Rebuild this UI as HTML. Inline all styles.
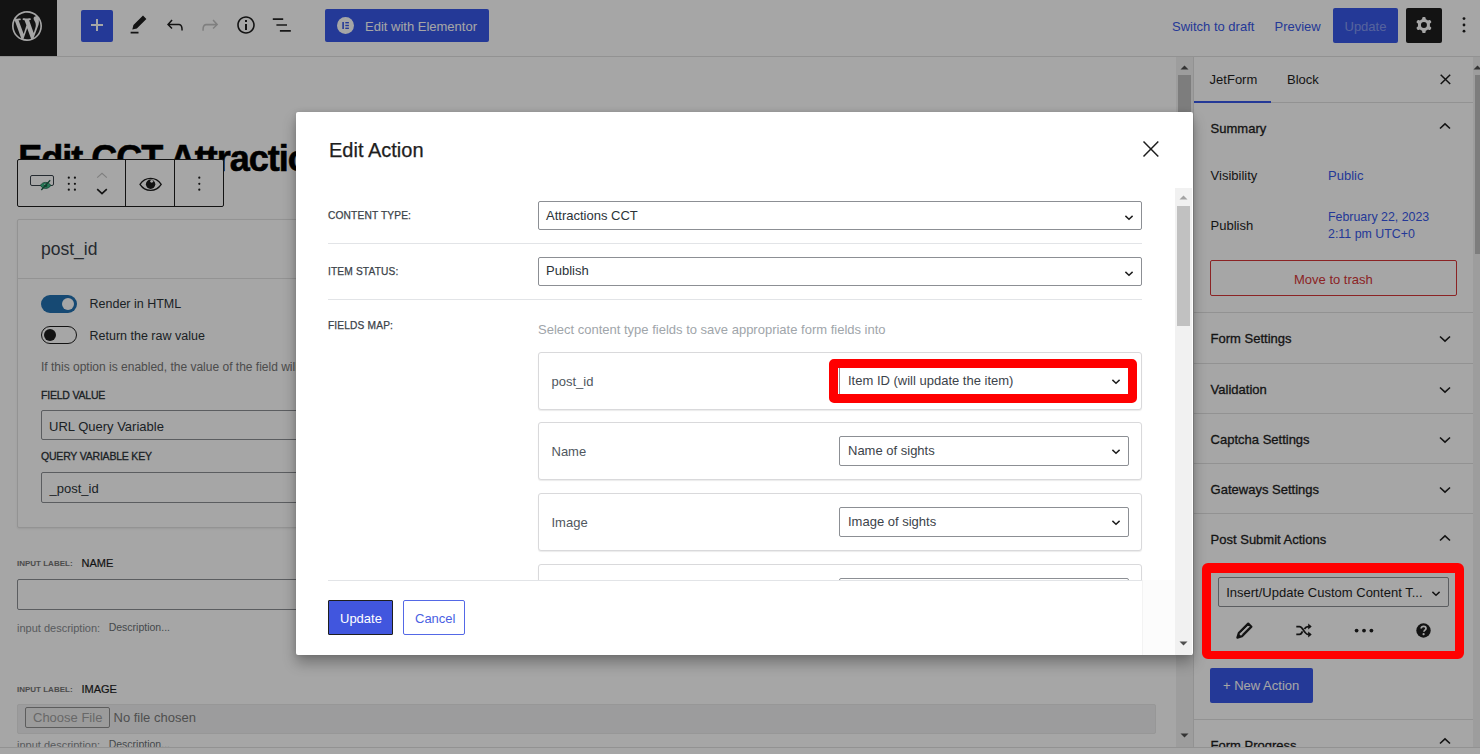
<!DOCTYPE html>
<html><head><meta charset="utf-8">
<style>
*{box-sizing:border-box;margin:0;padding:0}
html,body{width:1480px;height:754px;overflow:hidden;background:#fff;font-family:"Liberation Sans",sans-serif;color:#1e1e1e}
.a{position:absolute}
.t{position:absolute;white-space:nowrap;line-height:1}
svg{display:block}
/* top bar */
#topbar{left:0;top:0;width:1480px;height:57px;background:#fff;border-bottom:1px solid #e0e0e0}
#wplogo{left:0;top:0;width:57px;height:56px;background:#1e1e1e}
#overlay{left:0;top:0;width:1480px;height:754px;background:rgba(0,0,0,.35)}
#modal{left:296px;top:112px;width:897px;height:543px;background:#fff;border-radius:2px;box-shadow:0 8px 14px rgba(0,0,0,.3),0 0 5px rgba(0,0,0,.12)}
.redbox{position:absolute;border:9px solid #ff0000;border-radius:6px}
</style></head>
<body>
<!-- ============ PAGE (under overlay) ============ -->
<div id="page" class="a" style="left:0;top:0;width:1480px;height:754px">
  <div id="topbar" class="a"></div>
  <div id="wplogo" class="a"></div>
  <svg class="a" style="left:12px;top:11px" width="30" height="30" viewBox="0 0 20 20"><path fill="#fff" d="M20 10c0-5.51-4.49-10-10-10C4.48 0 0 4.49 0 10c0 5.52 4.48 10 10 10 5.51 0 10-4.48 10-10zM7.78 15.37L4.37 6.22c.55-.02 1.17-.08 1.17-.08.5-.06.44-1.130-.06-1.11 0 0-1.45.11-2.37.11-.18 0-.37 0-.58-.01C4.12 2.690 6.870 1.110 10 1.110c2.330 0 4.450.87 6.050 2.340-.68-.11-1.650.39-1.650 1.580 0 .74.45 1.360.9 2.100.35.61.55 1.360.55 2.460 0 1.490-1.400 5-1.400 5l-3.030-8.370c.54-.02.82-.17.82-.17.5-.05.44-1.250-.06-1.220 0 0-1.440.12-2.380.12-.87 0-2.330-.12-2.330-.12-.5-.03-.56 1.200-.06 1.220l.92.08 1.260 3.410zM17.410 10c.24-.64.74-1.870.43-4.250.7 1.290 1.050 2.710 1.050 4.250 0 3.290-1.730 6.240-4.400 7.780.97-2.590 1.940-5.200 2.920-7.780zM6.100 18.090C3.120 16.650 1.110 13.530 1.110 10c0-1.300.23-2.480.72-3.590C3.250 10.300 4.670 14.200 6.100 18.090zm4.030-6.630l2.580 6.980c-.86.29-1.760.45-2.710.45-.79 0-1.570-.11-2.290-.33.81-2.380 1.620-4.740 2.420-7.100z"/></svg>
  <div class="a" style="left:81px;top:10px;width:32px;height:32px;background:#3858e9;border-radius:2px"></div>
  <div class="a" style="left:90.7px;top:24.2px;width:12.2px;height:1.6px;background:#fff"></div><div class="a" style="left:96px;top:19px;width:1.6px;height:12.2px;background:#fff"></div>
  <svg class="a" style="left:124.6px;top:11px" width="27" height="27" viewBox="0 0 24 24"><path fill="#1e1e1e" d="m19 7-3-3-8.5 8.5-1 4 4-1L19 7Zm-7 11.5H5V20h7v-1.5Z"/></svg>
  <svg class="a" style="left:163px;top:13px" width="24" height="24" viewBox="0 0 24 24"><path fill="#1e1e1e" d="M18.3 11.7c-.6-.6-1.4-.9-2.3-.9H6.7l2.9-3.3-1.1-1-4.5 5L8.5 16l1-1-2.7-2.7H16c.5 0 .9.2 1.3.5 1 1 1 3.4 1 4.5v.3h1.5v-.2c0-1.5 0-4.3-1.5-5.7z"/></svg>
  <svg class="a" style="left:198px;top:13px" width="24" height="24" viewBox="0 0 24 24"><path fill="#c4c4c4" d="M15.6 6.5l-1.1 1 2.9 3.3H8c-.9 0-1.7.3-2.3.9-1.4 1.5-1.4 4.2-1.4 5.8v.2h1.5v-.3c0-1.1 0-3.5 1-4.5.3-.3.7-.5 1.300-.5h9.2L14.5 15l1.1 1.1 4.6-4.6-4.6-5z"/></svg>
  <svg class="a" style="left:234px;top:13px" width="24" height="24" viewBox="0 0 24 24"><path fill="#1e1e1e" d="M12 3.2c-4.8 0-8.8 3.9-8.8 8.8 0 4.8 3.9 8.8 8.8 8.8 4.8 0 8.8-3.9 8.8-8.8 0-4.8-4-8.8-8.8-8.8zm0 16c-4 0-7.2-3.3-7.2-7.2C4.8 8 8 4.8 12 4.8s7.2 3.3 7.2 7.2c0 4-3.2 7.2-7.2 7.2zM11 17h2v-6h-2v6zm0-8h2V7h-2v2z"/></svg>
  <svg class="a" style="left:270px;top:10px" width="24" height="24" viewBox="0 0 24 24"><path fill="#262626" d="M2.8 8.3h10.4v1.6H2.8zM6.4 14.2h10.6v1.6H6.4zM9.9 20.1h10.9v1.7H9.9z"/></svg>
  <div class="a" style="left:325px;top:9px;width:164px;height:33px;background:#3858e9;border-radius:2px"></div>
  <svg class="a" style="left:337px;top:17px" width="17" height="17" viewBox="0 0 17 17"><circle cx="8.5" cy="8.5" r="8.5" fill="#fff"/><rect x="5.3" y="5" width="1.6" height="7" fill="#3858e9"/><rect x="8.3" y="5" width="3.6" height="1.4" fill="#3858e9"/><rect x="8.3" y="7.8" width="3.6" height="1.4" fill="#3858e9"/><rect x="8.3" y="10.6" width="3.6" height="1.4" fill="#3858e9"/></svg>
  <div class="t" style="left:365px;top:20px;font-size:13px;color:#fff">Edit with Elementor</div>
  <div class="t" style="left:1172px;top:20px;font-size:13px;color:#3858e9">Switch to draft</div>
  <div class="t" style="left:1274.5px;top:20px;font-size:13px;color:#3858e9">Preview</div>
  <div class="a" style="left:1333px;top:8px;width:65px;height:35px;background:#3858e9;border-radius:2px"></div>
  <div class="t" style="left:1344.5px;top:20px;font-size:13px;color:rgba(255,255,255,.4)">Update</div>
  <div class="a" style="left:1406px;top:8px;width:36px;height:35px;background:#1e1e1e;border-radius:2px"></div>
  <svg class="a" style="left:1412px;top:13px" width="24" height="24" viewBox="0 0 24 24"><path fill="#fff" fill-rule="evenodd" d="M10.289 4.836A1 1 0 0111.275 4h1.306a1 1 0 01.987.836l.244 1.466c.787.26 1.503.679 2.108 1.218l1.393-.522a1 1 0 011.216.437l.653 1.13a1 1 0 01-.23 1.273l-1.148.944a6.025 6.025 0 010 2.435l1.149.946a1 1 0 01.23 1.272l-.653 1.13a1 1 0 01-1.216.437l-1.394-.522c-.605.54-1.32.958-2.108 1.218l-.244 1.466a1 1 0 01-.987.836h-1.306a1 1 0 01-.986-.836l-.244-1.466a5.995 5.995 0 01-2.108-1.218l-1.394.522a1 1 0 01-1.217-.436l-.653-1.131a1 1 0 01.23-1.272l1.149-.946a6.026 6.026 0 010-2.435l-1.148-.944a1 1 0 01-.23-1.272l.653-1.131a1 1 0 011.217-.437l1.393.522a5.994 5.994 0 012.108-1.218l.244-1.466zM14.929 12a3 3 0 11-6 0 3 3 0 016 0z"/></svg>
  <svg class="a" style="left:1460px;top:15px" width="8" height="20" viewBox="0 0 8 20"><circle cx="4" cy="3.6" r="1.4" fill="#1e1e1e"/><circle cx="4" cy="10" r="1.4" fill="#1e1e1e"/><circle cx="4" cy="16.2" r="1.4" fill="#1e1e1e"/></svg>
  <!-- editor canvas -->
  <div class="t" style="left:18.2px;top:140.5px;font-size:36px;font-weight:bold;color:#000;letter-spacing:-1px;-webkit-text-stroke:0.6px #000">Edit CCT Attractions</div>
  <!-- block toolbar -->
  <div class="a" style="left:17px;top:159px;width:207px;height:48px;background:#fff;border:1px solid #1e1e1e;border-radius:2px"></div>
  <div class="a" style="left:125px;top:159px;width:1px;height:48px;background:#1e1e1e"></div>
  <div class="a" style="left:174px;top:159px;width:1px;height:48px;background:#1e1e1e"></div>
  <svg class="a" style="left:24px;top:166px" width="90" height="34" viewBox="0 0 90 34">
    <rect x="6.5" y="9.5" width="23" height="10" rx="1.5" fill="none" stroke="#3a434c" stroke-width="1"/>
    <path d="M16.3 19.4C17.6 17.4 19.5 16.4 21.6 16.4S25.6 17.4 26.9 19.4C25.6 21.4 23.7 22.4 21.6 22.4S17.6 21.4 16.3 19.4Z" fill="#36b883" stroke="#1f5f49" stroke-width="0.8"/>
    <circle cx="21.6" cy="19.4" r="1.7" fill="#1f5f49"/><circle cx="21" cy="18.6" r="0.8" fill="#d8f0e6"/>
    <line x1="17.3" y1="24" x2="26.2" y2="14.3" stroke="#1f5f49" stroke-width="1.3"/>
    <circle cx="44.8" cy="11.7" r="1.1" fill="#1e1e1e"/><circle cx="50.9" cy="11.7" r="1.1" fill="#1e1e1e"/>
    <circle cx="44.8" cy="17.8" r="1.1" fill="#1e1e1e"/><circle cx="50.9" cy="17.8" r="1.1" fill="#1e1e1e"/>
    <circle cx="44.8" cy="23.7" r="1.1" fill="#1e1e1e"/><circle cx="50.9" cy="23.7" r="1.1" fill="#1e1e1e"/>
    <path d="M73.2 11.6l4.8-4.2 4.8 4.2" fill="none" stroke="#c4c4c4" stroke-width="1.2"/>
    <path d="M73.2 23.2l4.8 4.4 4.8-4.4" fill="none" stroke="#1e1e1e" stroke-width="1.6"/>
  </svg>
  <svg class="a" style="left:138px;top:176px" width="26" height="16" viewBox="0 0 26 16">
    <path d="M2 8.3C4.6 4.3 8.3 2.3 12.6 2.3S20.6 4.3 23.2 8.3C20.6 12.3 16.9 14.3 12.6 14.3S4.6 12.3 2 8.3Z" fill="none" stroke="#1e1e1e" stroke-width="1.3"/>
    <circle cx="12.6" cy="8.3" r="4.7" fill="#1e1e1e"/><circle cx="13.7" cy="5.3" r="1.4" fill="#fff"/>
  </svg>
  <svg class="a" style="left:195px;top:174px" width="8" height="20" viewBox="0 0 8 20"><circle cx="4.3" cy="3.7" r="1.1" fill="#1e1e1e"/><circle cx="4.3" cy="9.8" r="1.1" fill="#1e1e1e"/><circle cx="4.3" cy="15.7" r="1.1" fill="#1e1e1e"/></svg>
  <!-- hidden field panel -->
  <div class="a" style="left:17px;top:219px;width:1140px;height:309px;background:#fff;border:1px solid #e2e2e2;border-radius:2px;box-shadow:0 1px 2px rgba(0,0,0,.08)"></div>
  <div class="a" style="left:18px;top:278px;width:1138px;height:1px;background:#e2e2e2"></div>
  <div class="t" style="left:41px;top:241px;font-size:17.5px;color:#3c434a">post_id</div>
  <div class="a" style="left:41px;top:295px;width:36px;height:18px;border-radius:9px;background:#2271b1"></div>
  <div class="a" style="left:62px;top:298px;width:12px;height:12px;border-radius:6px;background:#fff"></div>
  <div class="t" style="left:89.5px;top:298px;font-size:12.5px;color:#2c3338">Render in HTML</div>
  <div class="a" style="left:41px;top:326px;width:36px;height:18px;border-radius:9px;border:1.5px solid #1e1e1e;background:#fff"></div>
  <div class="a" style="left:44px;top:329px;width:12px;height:12px;border-radius:6px;background:#1e1e1e"></div>
  <div class="t" style="left:89.5px;top:330px;font-size:12.5px;color:#2c3338">Return the raw value</div>
  <div class="t" style="left:41px;top:361px;font-size:12px;color:#757575">If this option is enabled, the value of the field will be returned as is</div>
  <div class="t" style="left:41px;top:390px;font-size:10.5px;color:#2c3338;letter-spacing:-0.2px;-webkit-text-stroke:0.3px #2c3338">FIELD VALUE</div>
  <div class="a" style="left:41px;top:410px;width:1090px;height:30px;border:1px solid #8c8f94;border-radius:2px;background:#fff"></div>
  <div class="t" style="left:49px;top:419.5px;font-size:13px;color:#2c3338">URL Query Variable</div>
  <div class="t" style="left:41px;top:451px;font-size:10.5px;color:#2c3338;letter-spacing:-0.2px;-webkit-text-stroke:0.3px #2c3338">QUERY VARIABLE KEY</div>
  <div class="a" style="left:41px;top:472px;width:1090px;height:31px;border:1px solid #8c8f94;border-radius:2px;background:#fff"></div>
  <div class="t" style="left:49.5px;top:482px;font-size:13px;color:#2c3338">_post_id</div>
  <!-- name field -->
  <div class="t" style="left:17px;top:560px;font-size:8px;font-weight:bold;color:#757575">INPUT LABEL:</div>
  <div class="t" style="left:81.5px;top:558px;font-size:11px;color:#1e1e1e;-webkit-text-stroke:0.2px #1e1e1e">NAME</div>
  <div class="a" style="left:17px;top:579px;width:1139px;height:31px;border:1px solid #8c8f94;border-radius:2px;background:#fff"></div>
  <div class="t" style="left:17px;top:623px;font-size:11px;color:#888c90">input description:</div>
  <div class="t" style="left:108.7px;top:622px;font-size:10.5px;color:#6a7075">Description...</div>
  <!-- image field -->
  <div class="t" style="left:17px;top:686px;font-size:8px;font-weight:bold;color:#757575">INPUT LABEL:</div>
  <div class="t" style="left:81.5px;top:684px;font-size:11px;color:#1e1e1e;-webkit-text-stroke:0.2px #1e1e1e">IMAGE</div>
  <div class="a" style="left:17px;top:704px;width:1139px;height:30px;border:1px solid #e8e8e8;border-radius:2px;background:#f0f0f1"></div>
  <div class="a" style="left:25px;top:707px;width:85px;height:21px;border:1px solid #8f8f8f;border-radius:2px;background:#efefef"></div>
  <div class="t" style="left:33px;top:711px;font-size:13px;color:#a0a0a0">Choose File</div>
  <div class="t" style="left:113.5px;top:711px;font-size:13px;color:#7a7a7a">No file chosen</div>
  <div class="t" style="left:17px;top:740px;font-size:11px;color:#888c90">input description:</div>
  <div class="t" style="left:108.7px;top:739px;font-size:10.5px;color:#6a7075">Description...</div>
  <!-- main scrollbar -->
  <div class="a" style="left:1176px;top:57px;width:17px;height:690px;background:#f1f1f1"></div>
  <div class="a" style="left:1178px;top:75px;width:13px;height:300px;background:#c1c1c1"></div>
  <svg class="a" style="left:1176px;top:62px" width="17" height="10" viewBox="0 0 17 10"><path d="M4.5 7.5h8l-4-4z" fill="#505050"/></svg>
  <svg class="a" style="left:1176px;top:731px" width="17" height="10" viewBox="0 0 17 10"><path d="M4.5 2.5h8l-4 4z" fill="#505050"/></svg>
  <!-- sidebar -->
  <div class="a" style="left:1193px;top:57px;width:287px;height:690px;background:#fff;border-left:1px solid #e0e0e0"></div>
  <div class="t" style="left:1209.6px;top:73.4px;font-size:13px;color:#1e1e1e;">JetForm</div>
  <div class="t" style="left:1287px;top:73.4px;font-size:13px;color:#1e1e1e;">Block</div>
  <div class="a" style="left:1194px;top:102px;width:279px;height:1px;background:#e0e0e0"></div>
  <div class="a" style="left:1194px;top:101px;width:77px;height:2px;background:#3858e9"></div>
  <svg class="a" style="left:1439px;top:73px" width="13" height="13" viewBox="0 0 13 13"><path d="M1.7 1.7l9.5 9.3M11.2 1.7L1.7 11" fill="none" stroke="#1e1e1e" stroke-width="1.5"/></svg>
  <div class="t" style="left:1210.6px;top:121.8px;font-size:13px;color:#1e1e1e;font-weight:normal;-webkit-text-stroke:0.3px #1e1e1e">Summary</div>
  <svg class="a" style="left:1439.3px;top:121.5px" width="12" height="8" viewBox="0 0 12 8"><path d="M1 6.5l5-4.6 5 4.6" fill="none" stroke="#1e1e1e" stroke-width="1.6"/></svg>
  <div class="t" style="left:1210.6px;top:169.4px;font-size:13px;color:#1e1e1e;">Visibility</div>
  <div class="t" style="left:1328px;top:169.4px;font-size:13px;color:#3858e9;">Public</div>
  <div class="t" style="left:1210.6px;top:219.2px;font-size:13px;color:#1e1e1e;">Publish</div>
  <div class="t" style="left:1328px;top:210.5px;font-size:12.4px;color:#3858e9;">February 22, 2023</div>
  <div class="t" style="left:1328px;top:227.5px;font-size:12.4px;color:#3858e9;">2:11 pm UTC+0</div>
  <div class="a" style="left:1210px;top:260px;width:247px;height:36px;border:1px solid #d63638;border-radius:2px"></div>
  <div class="t" style="left:1294px;top:272.7px;font-size:13px;color:#d63638;">Move to trash</div>
  <div class="a" style="left:1194px;top:312px;width:279px;height:1px;background:#e0e0e0"></div>
  <div class="a" style="left:1194px;top:363px;width:279px;height:1px;background:#e0e0e0"></div>
  <div class="a" style="left:1194px;top:413px;width:279px;height:1px;background:#e0e0e0"></div>
  <div class="a" style="left:1194px;top:463px;width:279px;height:1px;background:#e0e0e0"></div>
  <div class="a" style="left:1194px;top:513px;width:279px;height:1px;background:#e0e0e0"></div>
  <div class="a" style="left:1194px;top:719px;width:279px;height:1px;background:#e0e0e0"></div>
  <div class="t" style="left:1210.6px;top:332px;font-size:13px;color:#1e1e1e;font-weight:normal;-webkit-text-stroke:0.3px #1e1e1e">Form Settings</div>
  <svg class="a" style="left:1439.3px;top:335px" width="12" height="8" viewBox="0 0 12 8"><path d="M1 1.5l5 4.6 5-4.6" fill="none" stroke="#1e1e1e" stroke-width="1.6"/></svg>
  <div class="t" style="left:1210.6px;top:382.6px;font-size:13px;color:#1e1e1e;font-weight:normal;-webkit-text-stroke:0.3px #1e1e1e">Validation</div>
  <svg class="a" style="left:1439.3px;top:385.6px" width="12" height="8" viewBox="0 0 12 8"><path d="M1 1.5l5 4.6 5-4.6" fill="none" stroke="#1e1e1e" stroke-width="1.6"/></svg>
  <div class="t" style="left:1210.6px;top:433.3px;font-size:13px;color:#1e1e1e;font-weight:normal;-webkit-text-stroke:0.3px #1e1e1e">Captcha Settings</div>
  <svg class="a" style="left:1439.3px;top:436.3px" width="12" height="8" viewBox="0 0 12 8"><path d="M1 1.5l5 4.6 5-4.6" fill="none" stroke="#1e1e1e" stroke-width="1.6"/></svg>
  <div class="t" style="left:1210.6px;top:482.8px;font-size:13px;color:#1e1e1e;font-weight:normal;-webkit-text-stroke:0.3px #1e1e1e">Gateways Settings</div>
  <svg class="a" style="left:1439.3px;top:485.8px" width="12" height="8" viewBox="0 0 12 8"><path d="M1 1.5l5 4.6 5-4.6" fill="none" stroke="#1e1e1e" stroke-width="1.6"/></svg>
  <div class="t" style="left:1210.6px;top:533px;font-size:13px;color:#1e1e1e;font-weight:normal;-webkit-text-stroke:0.3px #1e1e1e">Post Submit Actions</div>
  <svg class="a" style="left:1439.3px;top:533.5px" width="12" height="8" viewBox="0 0 12 8"><path d="M1 6.5l5-4.6 5 4.6" fill="none" stroke="#1e1e1e" stroke-width="1.6"/></svg>
  <div class="a" style="left:1218px;top:577px;width:231px;height:30px;border:1px solid #8c8f94;border-radius:2px;background:#fff"></div>
  <div class="t" style="left:1226.2px;top:585.7px;font-size:13px;color:#1e1e1e;">Insert/Update Custom Content T...</div>
  <svg class="a" style="left:1431px;top:590px" width="10" height="7" viewBox="0 0 10 7"><path d="M1.4 1.9l3.6 3.3 3.6-3.3" fill="none" stroke="#1e1e1e" stroke-width="1.45"/></svg>
  <svg class="a" style="left:1236px;top:622px" width="17" height="17" viewBox="0 0 17 17"><path d="M12.2 1.6l3.2 3.2-9.4 9.4-4.6 1.4 1.4-4.6z" fill="none" stroke="#1e1e1e" stroke-width="2.2" stroke-linejoin="round"/><path d="M4.6 10.2l7-7M6.6 12.2l7-7" stroke="#1e1e1e" stroke-width="0.9"/><path d="M1.6 15.4l1.2-3.6 2.4 2.4z" fill="#1e1e1e"/></svg>
  <svg class="a" style="left:1295px;top:622px" width="18" height="17" viewBox="0 0 18 17"><path d="M1.3 4.6h3.2c3.5 0 4.8 7.8 8.6 7.8h2.2M1.3 12.4h3.2c1.5 0 2.4-1.5 3-3M9.4 7c.8-1.3 1.8-2.4 3.7-2.4h2.2" fill="none" stroke="#1e1e1e" stroke-width="1.8"/><path d="M13.2 1.6l3.5 3-3.5 3zM13.2 9.4l3.5 3-3.5 3z" fill="#1e1e1e"/></svg>
  <svg class="a" style="left:1353px;top:627px" width="22" height="8" viewBox="0 0 22 8"><circle cx="3.6" cy="3.6" r="1.9" fill="#1e1e1e"/><circle cx="11" cy="3.6" r="1.9" fill="#1e1e1e"/><circle cx="18.4" cy="3.6" r="1.9" fill="#1e1e1e"/></svg>
  <svg class="a" style="left:1416px;top:623px" width="15" height="15" viewBox="0 0 15 15"><circle cx="7.5" cy="7.5" r="7.2" fill="#1e1e1e"/><path d="M5.2 5.6c0-1.4 1-2.3 2.4-2.3s2.4.9 2.4 2.1c0 1.6-2.1 1.7-2.1 3.3" fill="none" stroke="#fff" stroke-width="1.7"/><circle cx="7.6" cy="11.2" r="1.1" fill="#fff"/></svg>
  <div class="a" style="left:1210px;top:668px;width:103px;height:35px;background:#3858e9;border-radius:2px"></div>
  <div class="t" style="left:1223px;top:679px;font-size:13px;color:#fff;">+ New Action</div>
  <div class="t" style="left:1210.6px;top:739px;font-size:13px;color:#1e1e1e;font-weight:normal;-webkit-text-stroke:0.3px #1e1e1e">Form Progress</div>
  <svg class="a" style="left:1439.3px;top:737px" width="12" height="8" viewBox="0 0 12 8"><path d="M1 6.5l5-4.6 5 4.6" fill="none" stroke="#1e1e1e" stroke-width="1.6"/></svg>
  <div class="a" style="left:1473px;top:57px;width:7px;height:690px;background:#f1f1f1"></div>
  <div class="a" style="left:1475px;top:75px;width:5px;height:179px;background:#c1c1c1"></div>
  <svg class="a" style="left:1473px;top:62px" width="7" height="10" viewBox="0 0 7 10"><path d="M0.5 7.5h8l-4-4z" fill="#505050"/></svg>
  <!-- bottom bar -->
  <div class="a" style="left:0;top:747px;width:1480px;height:7px;background:#fff;border-top:1px solid #e0e0e0"></div>
</div>

<div id="overlay" class="a"></div>

<!-- ============ MODAL ============ -->
<div id="modal" class="a">
<div class="t" style="left:33px;top:28px;font-size:20px;color:#1e1e1e;-webkit-text-stroke:0.25px #1e1e1e">Edit Action</div>
<svg class="a" style="left:846px;top:28px" width="18" height="18" viewBox="0 0 18 18"><path d="M1.5 1.5l14.8 15M16.3 1.5L1.5 16.5" fill="none" stroke="#1e1e1e" stroke-width="1.5"/></svg>
<div class="t" style="left:32px;top:99.2px;font-size:10.2px;color:#3c434a;letter-spacing:0.15px;-webkit-text-stroke:0.25px #3c434a">CONTENT TYPE:</div>
<div class="a" style="left:242px;top:89px;width:604px;height:29px;border:1px solid #8c8f94;border-radius:2px;background:#fff"></div>
<div class="t" style="left:250px;top:97.4px;font-size:13px;color:#2c3338;">Attractions CCT</div>
<svg class="a" style="left:828px;top:102px" width="10" height="7" viewBox="0 0 10 7"><path d="M1.4 1.9l3.6 3.3 3.6-3.3" fill="none" stroke="#1e1e1e" stroke-width="1.45"/></svg>
<div class="a" style="left:32px;top:131px;width:814px;height:1px;background:#e2e4e7"></div>
<div class="t" style="left:32px;top:155px;font-size:10.2px;color:#3c434a;letter-spacing:0.15px;-webkit-text-stroke:0.25px #3c434a">ITEM STATUS:</div>
<div class="a" style="left:242px;top:145px;width:604px;height:29px;border:1px solid #8c8f94;border-radius:2px;background:#fff"></div>
<div class="t" style="left:250px;top:152px;font-size:13px;color:#2c3338;">Publish</div>
<svg class="a" style="left:828px;top:158px" width="10" height="7" viewBox="0 0 10 7"><path d="M1.4 1.9l3.6 3.3 3.6-3.3" fill="none" stroke="#1e1e1e" stroke-width="1.45"/></svg>
<div class="a" style="left:32px;top:187px;width:814px;height:1px;background:#e2e4e7"></div>
<div class="t" style="left:32px;top:208.5px;font-size:10.2px;color:#3c434a;letter-spacing:0.15px;-webkit-text-stroke:0.25px #3c434a">FIELDS MAP:</div>
<div class="t" style="left:242px;top:210.5px;font-size:13px;color:#a0a5aa;">Select content type fields to save appropriate form fields into</div>
<div class="a" style="left:0;top:76px;width:879px;height:392px;overflow:hidden"><div class="a" style="left:242px;top:164px;width:604px;height:58px;border:1px solid #d9d9db;border-radius:3px;background:#fff;box-shadow:0 1px 1px rgba(0,0,0,.08)"></div>
<div class="t" style="left:255.5px;top:187.4px;font-size:13px;color:#50575e">post_id</div>
<div class="a" style="left:543px;top:178px;width:290px;height:30px;border:1px solid #8c8f94;border-radius:2px;background:#fff"></div>
<div class="t" style="left:552px;top:185.5px;font-size:13px;color:#3c434a">Item ID (will update the item)</div>
<svg class="a" style="left:815px;top:190px" width="10" height="7" viewBox="0 0 10 7"><path d="M1.4 1.9l3.6 3.3 3.6-3.3" fill="none" stroke="#1e1e1e" stroke-width="1.45"/></svg>
<div class="a" style="left:242px;top:234px;width:604px;height:58px;border:1px solid #d9d9db;border-radius:3px;background:#fff;box-shadow:0 1px 1px rgba(0,0,0,.08)"></div>
<div class="t" style="left:255.5px;top:257.4px;font-size:13px;color:#50575e">Name</div>
<div class="a" style="left:543px;top:248px;width:290px;height:30px;border:1px solid #8c8f94;border-radius:2px;background:#fff"></div>
<div class="t" style="left:552px;top:255.5px;font-size:13px;color:#3c434a">Name of sights</div>
<svg class="a" style="left:815px;top:260px" width="10" height="7" viewBox="0 0 10 7"><path d="M1.4 1.9l3.6 3.3 3.6-3.3" fill="none" stroke="#1e1e1e" stroke-width="1.45"/></svg>
<div class="a" style="left:242px;top:305px;width:604px;height:58px;border:1px solid #d9d9db;border-radius:3px;background:#fff;box-shadow:0 1px 1px rgba(0,0,0,.08)"></div>
<div class="t" style="left:255.5px;top:328.4px;font-size:13px;color:#50575e">Image</div>
<div class="a" style="left:543px;top:319px;width:290px;height:30px;border:1px solid #8c8f94;border-radius:2px;background:#fff"></div>
<div class="t" style="left:552px;top:326.5px;font-size:13px;color:#3c434a">Image of sights</div>
<svg class="a" style="left:815px;top:331px" width="10" height="7" viewBox="0 0 10 7"><path d="M1.4 1.9l3.6 3.3 3.6-3.3" fill="none" stroke="#1e1e1e" stroke-width="1.45"/></svg>
<div class="a" style="left:242px;top:376px;width:604px;height:58px;border:1px solid #d9d9db;border-radius:3px;background:#fff;box-shadow:0 1px 1px rgba(0,0,0,.08)"></div>
<div class="a" style="left:543px;top:390px;width:290px;height:30px;border:1px solid #8c8f94;border-radius:2px;background:#fff"></div></div>
<div class="a" style="left:32px;top:468px;width:814px;height:1px;background:#e2e4e7"></div>
<div class="a" style="left:32px;top:488px;width:65px;height:35px;background:#4156de;border:1px solid #1e1e1e;border-radius:1px"></div>
<div class="t" style="left:44px;top:500px;font-size:13px;color:#fff;">Update</div>
<div class="a" style="left:107px;top:488px;width:62px;height:35px;border:1px solid #5468e6;border-radius:2px;background:#fff"></div>
<div class="t" style="left:119px;top:500px;font-size:13px;color:#4a5fe3;">Cancel</div>
<div class="a" style="left:846px;top:468px;width:33px;height:75px;background:#fcfcfc;border-left:1px solid #f3f3f3"></div>
<div class="a" style="left:879px;top:76px;width:17px;height:467px;background:#f1f1f1"></div>
<div class="a" style="left:881px;top:94px;width:13px;height:120px;background:#c1c1c1"></div>
<svg class="a" style="left:879px;top:80px" width="17" height="10" viewBox="0 0 17 10"><path d="M4.5 7.5h8l-4-4z" fill="#a3a3a3"/></svg>
<svg class="a" style="left:879px;top:527px" width="17" height="10" viewBox="0 0 17 10"><path d="M4.5 2.5h8l-4 4z" fill="#505050"/></svg>
</div>

<!-- red annotation boxes -->
<div class="redbox" style="left:829px;top:359px;width:308px;height:44px;border-width:9px 9px 9px 9px;border-radius:5px"></div>
<div class="redbox" style="left:1202px;top:563px;width:262px;height:96px;border-width:10px 9px 8px 9px"></div>
</body></html>
